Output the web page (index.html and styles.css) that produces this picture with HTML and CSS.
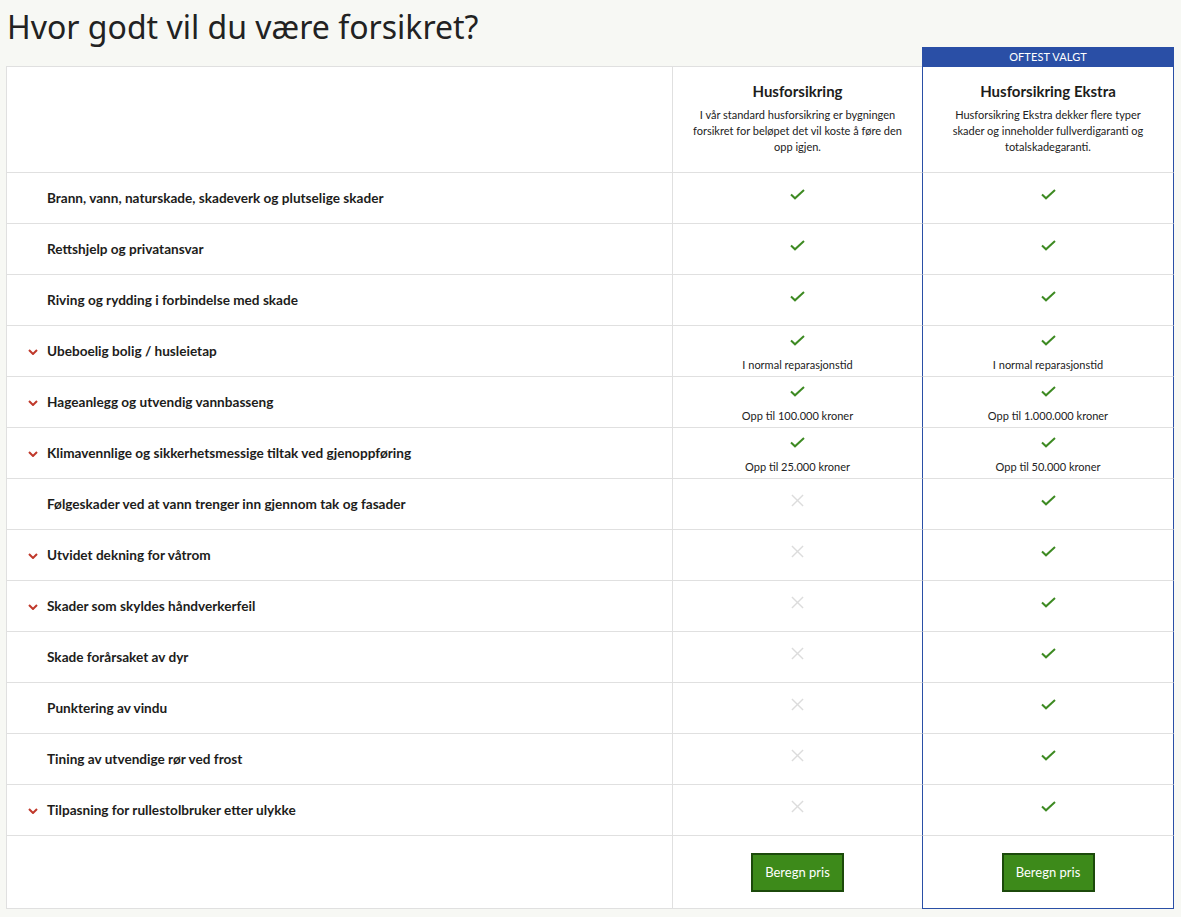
FILE: index.html
```html
<!DOCTYPE html>
<html lang="no">
<head>
<meta charset="utf-8">
<title>Hvor godt vil du være forsikret?</title>
<link rel="stylesheet" href="styles.css">
</head>
<body>
<main class="page">
  <h1 class="title">Hvor godt vil du være forsikret?</h1>
  <div class="grid badge-row">
    <div class="badge">OFTEST VALGT</div>
  </div>
  <div class="compare">
    <div class="grid row head">
      <div class="c1"></div>
      <div class="c2 plan">
        <div class="plan-name">Husforsikring</div>
        <p class="plan-desc">I vår standard husforsikring er bygningen forsikret for beløpet det vil koste å føre den opp igjen.</p>
      </div>
      <div class="c3 plan">
        <div class="plan-name">Husforsikring Ekstra</div>
        <p class="plan-desc">Husforsikring Ekstra dekker flere typer skader og inneholder fullverdigaranti og totalskadegaranti.</p>
      </div>
    </div>

    <div class="grid row">
      <div class="c1 label"><span class="chev"></span>Brann, vann, naturskade, skadeverk og plutselige skader</div>
      <div class="c2 val"><svg class="ok" viewBox="0 0 15 11"><path d="M1 5.5 L5 9.3 L14 1"/></svg></div>
      <div class="c3 val"><svg class="ok" viewBox="0 0 15 11"><path d="M1 5.5 L5 9.3 L14 1"/></svg></div>
    </div>
    <div class="grid row">
      <div class="c1 label"><span class="chev"></span>Rettshjelp og privatansvar</div>
      <div class="c2 val"><svg class="ok" viewBox="0 0 15 11"><path d="M1 5.5 L5 9.3 L14 1"/></svg></div>
      <div class="c3 val"><svg class="ok" viewBox="0 0 15 11"><path d="M1 5.5 L5 9.3 L14 1"/></svg></div>
    </div>
    <div class="grid row">
      <div class="c1 label"><span class="chev"></span>Riving og rydding i forbindelse med skade</div>
      <div class="c2 val"><svg class="ok" viewBox="0 0 15 11"><path d="M1 5.5 L5 9.3 L14 1"/></svg></div>
      <div class="c3 val"><svg class="ok" viewBox="0 0 15 11"><path d="M1 5.5 L5 9.3 L14 1"/></svg></div>
    </div>
    <div class="grid row">
      <div class="c1 label"><span class="chev"><svg viewBox="0 0 10 6"><path d="M1 1 L5 5 L9 1"/></svg></span>Ubeboelig bolig / husleietap</div>
      <div class="c2 val sub"><svg class="ok" viewBox="0 0 15 11"><path d="M1 5.5 L5 9.3 L14 1"/></svg><span class="note">I normal reparasjonstid</span></div>
      <div class="c3 val sub"><svg class="ok" viewBox="0 0 15 11"><path d="M1 5.5 L5 9.3 L14 1"/></svg><span class="note">I normal reparasjonstid</span></div>
    </div>
    <div class="grid row">
      <div class="c1 label"><span class="chev"><svg viewBox="0 0 10 6"><path d="M1 1 L5 5 L9 1"/></svg></span>Hageanlegg og utvendig vannbasseng</div>
      <div class="c2 val sub"><svg class="ok" viewBox="0 0 15 11"><path d="M1 5.5 L5 9.3 L14 1"/></svg><span class="note">Opp til 100.000 kroner</span></div>
      <div class="c3 val sub"><svg class="ok" viewBox="0 0 15 11"><path d="M1 5.5 L5 9.3 L14 1"/></svg><span class="note">Opp til 1.000.000 kroner</span></div>
    </div>
    <div class="grid row">
      <div class="c1 label"><span class="chev"><svg viewBox="0 0 10 6"><path d="M1 1 L5 5 L9 1"/></svg></span>Klimavennlige og sikkerhetsmessige tiltak ved gjenoppføring</div>
      <div class="c2 val sub"><svg class="ok" viewBox="0 0 15 11"><path d="M1 5.5 L5 9.3 L14 1"/></svg><span class="note">Opp til 25.000 kroner</span></div>
      <div class="c3 val sub"><svg class="ok" viewBox="0 0 15 11"><path d="M1 5.5 L5 9.3 L14 1"/></svg><span class="note">Opp til 50.000 kroner</span></div>
    </div>
    <div class="grid row">
      <div class="c1 label"><span class="chev"></span>Følgeskader ved at vann trenger inn gjennom tak og fasader</div>
      <div class="c2 val"><svg class="no" viewBox="0 0 14 14"><path d="M1 1 L13 13 M13 1 L1 13"/></svg></div>
      <div class="c3 val"><svg class="ok" viewBox="0 0 15 11"><path d="M1 5.5 L5 9.3 L14 1"/></svg></div>
    </div>
    <div class="grid row">
      <div class="c1 label"><span class="chev"><svg viewBox="0 0 10 6"><path d="M1 1 L5 5 L9 1"/></svg></span>Utvidet dekning for våtrom</div>
      <div class="c2 val"><svg class="no" viewBox="0 0 14 14"><path d="M1 1 L13 13 M13 1 L1 13"/></svg></div>
      <div class="c3 val"><svg class="ok" viewBox="0 0 15 11"><path d="M1 5.5 L5 9.3 L14 1"/></svg></div>
    </div>
    <div class="grid row">
      <div class="c1 label"><span class="chev"><svg viewBox="0 0 10 6"><path d="M1 1 L5 5 L9 1"/></svg></span>Skader som skyldes håndverkerfeil</div>
      <div class="c2 val"><svg class="no" viewBox="0 0 14 14"><path d="M1 1 L13 13 M13 1 L1 13"/></svg></div>
      <div class="c3 val"><svg class="ok" viewBox="0 0 15 11"><path d="M1 5.5 L5 9.3 L14 1"/></svg></div>
    </div>
    <div class="grid row">
      <div class="c1 label"><span class="chev"></span>Skade forårsaket av dyr</div>
      <div class="c2 val"><svg class="no" viewBox="0 0 14 14"><path d="M1 1 L13 13 M13 1 L1 13"/></svg></div>
      <div class="c3 val"><svg class="ok" viewBox="0 0 15 11"><path d="M1 5.5 L5 9.3 L14 1"/></svg></div>
    </div>
    <div class="grid row">
      <div class="c1 label"><span class="chev"></span>Punktering av vindu</div>
      <div class="c2 val"><svg class="no" viewBox="0 0 14 14"><path d="M1 1 L13 13 M13 1 L1 13"/></svg></div>
      <div class="c3 val"><svg class="ok" viewBox="0 0 15 11"><path d="M1 5.5 L5 9.3 L14 1"/></svg></div>
    </div>
    <div class="grid row">
      <div class="c1 label"><span class="chev"></span>Tining av utvendige rør ved frost</div>
      <div class="c2 val"><svg class="no" viewBox="0 0 14 14"><path d="M1 1 L13 13 M13 1 L1 13"/></svg></div>
      <div class="c3 val"><svg class="ok" viewBox="0 0 15 11"><path d="M1 5.5 L5 9.3 L14 1"/></svg></div>
    </div>
    <div class="grid row">
      <div class="c1 label"><span class="chev"><svg viewBox="0 0 10 6"><path d="M1 1 L5 5 L9 1"/></svg></span>Tilpasning for rullestolbruker etter ulykke</div>
      <div class="c2 val"><svg class="no" viewBox="0 0 14 14"><path d="M1 1 L13 13 M13 1 L1 13"/></svg></div>
      <div class="c3 val"><svg class="ok" viewBox="0 0 15 11"><path d="M1 5.5 L5 9.3 L14 1"/></svg></div>
    </div>

    <div class="grid row foot">
      <div class="c1"></div>
      <div class="c2 act"><button class="btn" type="button">Beregn pris</button></div>
      <div class="c3 act"><button class="btn" type="button">Beregn pris</button></div>
    </div>
  </div>
</main>
</body>
</html>
```

FILE: styles.css
```css
* { box-sizing: border-box; }

html, body {
  margin: 0;
  padding: 0;
  background: #f7f8f4;
}

body {
  font-family: Lato, "Open Sans", sans-serif;
  color: #1d1d1b;
}

.page {
  padding: 0 6px;
}

.title {
  margin: 0;
  padding-top: 5px;
  height: 47px;
  font-family: "Noto Sans", "Open Sans", sans-serif;
  font-weight: 400;
  font-size: 32px;
  line-height: 44px;
  color: #222;
  padding-left: 1px;
}

.grid {
  display: grid;
  grid-template-columns: 666px 250px 252px;
}

.badge-row .badge {
  grid-column: 3;
  height: 19px;
  background: #2a4fa6;
  color: #fff;
  font-size: 11px;
  line-height: 19px;
  text-align: center;
  letter-spacing: 0.1px;
}

.compare {
  width: 1168px;
}

.row > div {
  background: #fff;
  border-bottom: 1px solid #e0e0e0;
}

.row > .c1,
.row > .c2 {
  border-left: 1px solid #e0e0e0;
}

.row > .c3 {
  border-left: 1px solid #2a4fa6;
  border-right: 1px solid #2a4fa6;
}

.head > .c1,
.head > .c2 {
  border-top: 1px solid #e0e0e0;
}

.head > .c3 {
  border-top: 1px solid #2a4fa6;
}

.foot > .c3 {
  border-bottom: 1px solid #2a4fa6;
}

.plan {
  height: 107px;
  padding: 14px 16px 0;
  text-align: center;
}

.plan-name {
  font-weight: 700;
  font-size: 15px;
  line-height: 20px;
}

.plan-desc {
  margin: 6px 0 0;
  font-size: 11px;
  line-height: 16px;
  color: #222;
}

.row:not(.head):not(.foot) > div {
  height: 51px;
}

.label {
  display: flex;
  align-items: center;
  padding-left: 20px;
  font-weight: 700;
  font-size: 13.6px;
}

.chev {
  width: 20px;
  flex: none;
  display: flex;
  align-items: center;
}

.chev svg {
  width: 10px;
  height: 6px;
  margin-left: 1px;
  margin-top: 1px;
}

.chev path {
  fill: none;
  stroke: #c0392b;
  stroke-width: 2;
}

.val {
  display: flex;
  flex-direction: column;
  align-items: center;
  padding-top: 16px;
}

.val.sub {
  padding-top: 9px;
}

.ok {
  width: 15px;
  height: 11px;
}

.ok path {
  fill: none;
  stroke: #3d8a22;
  stroke-width: 2;
}

.no {
  width: 13px;
  height: 13px;
  margin-top: -1px;
}

.no path {
  fill: none;
  stroke: #dcdcdc;
  stroke-width: 1.5;
}

.note {
  margin-top: 11px;
  font-size: 11px;
  line-height: 16px;
  color: #222;
}

.act {
  height: 73px;
  display: flex;
  align-items: center;
  justify-content: center;
}

.btn {
  width: 93px;
  height: 39px;
  background: #3d8a1a;
  border: 2px solid #1c4a0b;
  color: #fff;
  font-family: Lato, "Open Sans", sans-serif;
  font-size: 13px;
  padding: 0;
  cursor: pointer;
}
```
